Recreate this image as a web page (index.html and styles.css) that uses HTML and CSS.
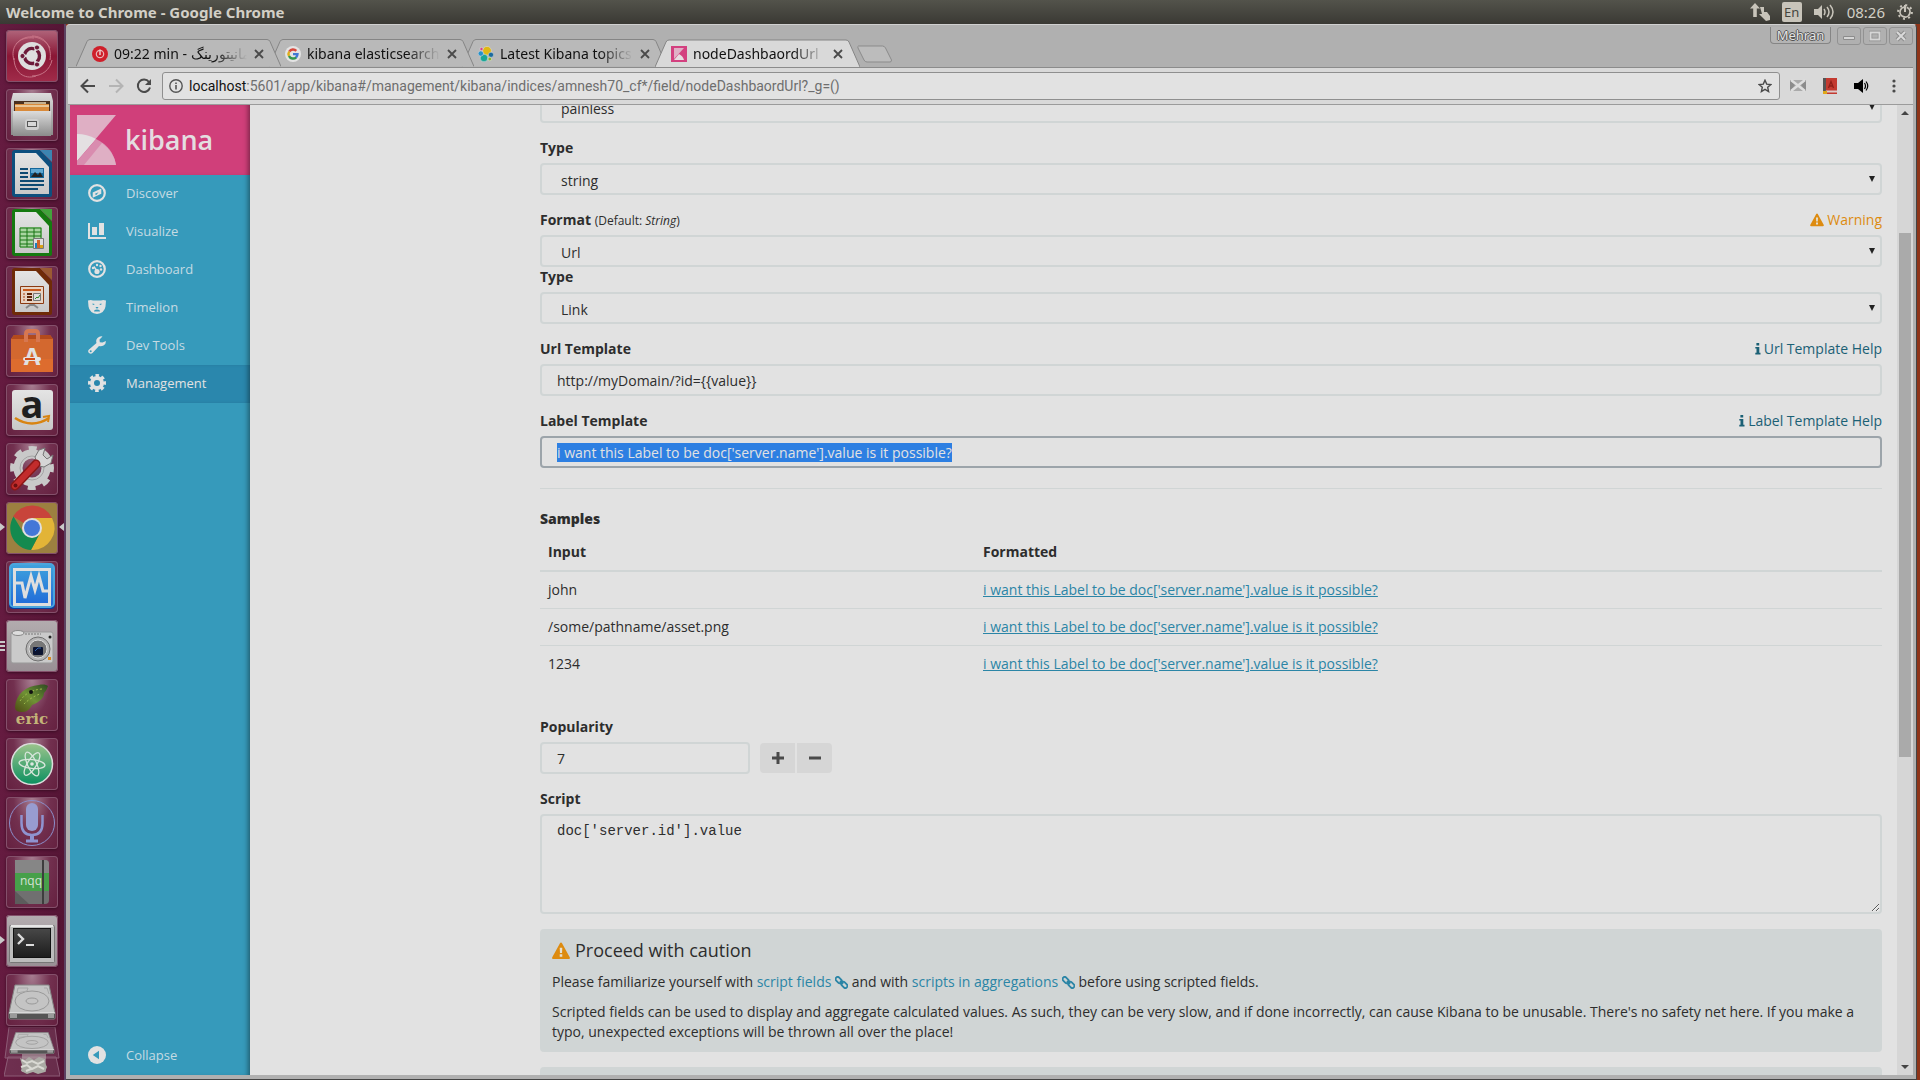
FILE: index.html
```html
<!DOCTYPE html>
<html lang="en">
<head>
    <meta charset="UTF-8">
    <meta name="viewport" content="width=device-width, initial-scale=1.0">
    <title>nodeDashbaordUrl - Kibana</title>
    <link rel="stylesheet" href="styles.css">
</head>
<body>

    <!-- shared gradients and symbols -->
    <svg class="defs" width="0" height="0" aria-hidden="true">
        <defs>
            <linearGradient id="metal" x1="0" y1="0" x2="0" y2="1"><stop offset="0" stop-color="#dcdcdc"/><stop offset="1" stop-color="#8b8b8b"/></linearGradient>
            <linearGradient id="paper" x1="0" y1="0" x2="0" y2="1"><stop offset="0" stop-color="#e4e4e4"/><stop offset="1" stop-color="#c8c8c8"/></linearGradient>
            <linearGradient id="blue" x1="0" y1="0" x2="0" y2="1"><stop offset="0" stop-color="#3fa3dd"/><stop offset="1" stop-color="#1f68d8"/></linearGradient>
            <linearGradient id="green" x1="0" y1="0" x2="0" y2="1"><stop offset="0" stop-color="#9cc48c"/><stop offset="1" stop-color="#0b9060"/></linearGradient>
            <linearGradient id="snake" x1="0" y1="1" x2="1" y2="0"><stop offset="0" stop-color="#4d4a12"/><stop offset=".5" stop-color="#6f9235"/><stop offset="1" stop-color="#2e4a20"/></linearGradient>
            <linearGradient id="screen" x1="0" y1="0" x2="0" y2="1"><stop offset="0" stop-color="#484848"/><stop offset="1" stop-color="#1c1c1c"/></linearGradient>
        </defs>
        <symbol id="i-warning" viewBox="0 0 14 14"><path fill="currentColor" d="M6.2.9a.9.9 0 0 1 1.6 0l6 11c.3.6 0 1.3-.8 1.3H1c-.8 0-1.100-.7-.8-1.300z"/><path fill="#e6e0d2" d="M6 4.400h2l-.2 4.200H6.200zM6 9.500h2v1.900H6z"/></symbol>
        <symbol id="i-info" viewBox="0 0 6 12"><path fill="currentColor" d="M1.400 0h2.800v2.400H1.400zM.3 4h4v5.800h1.200v1.700H.3V9.800h1.200V5.600H.3z"/></symbol>
        <symbol id="i-link" viewBox="0 0 13 13"><g fill="none" stroke="currentColor" stroke-width="1.800"><rect x="0.200" y="2" width="7" height="4.200" rx="2.100" transform="rotate(45 3.700 4.100)"/><rect x="5.800" y="6.800" width="7" height="4.200" rx="2.100" transform="rotate(45 9.300 8.900)"/><path d="M5 5l3 3"/></g></symbol>
        <symbol id="i-close" viewBox="0 0 10 10"><path d="M1 1l8 8M9 1L1 9" stroke="#4a4a4a" stroke-width="1.800" fill="none"/></symbol>
        <symbol id="i-drive" viewBox="0 0 48 36" preserveAspectRatio="none">
            <path d="M7 1h34l6 28v5a1 1 0 0 1-1 1H2a1 1 0 0 1-1-1v-5z" fill="#c4c4c4" stroke="#858585"/>
            <path d="M1 29h46v5a1 1 0 0 1-1 1H2a1 1 0 0 1-1-1z" fill="#555"/><path d="M2 30h7v4H2zM40 30h6v4h-6z" fill="#9a9a9a"/>
            <path d="M1 29h46" stroke="#eee"/>
            <ellipse cx="24" cy="17" rx="17" ry="10" fill="none" stroke="#999"/><ellipse cx="24" cy="17" rx="6" ry="3" fill="none" stroke="#999"/>
            <path d="M10 4h10l-1 3-10 2zM36 4h3l2 6" fill="none" stroke="#a8a8a8"/>
        </symbol>
    </svg>

    <header class="topbar">
        <span class="topbar-title">Welcome to Chrome - Google Chrome</span>
        <div class="indicators">
            <svg width="20" height="18" viewBox="0 0 20 18"><path fill="#c8c4ba" d="M5 0l5 5.500H6.800V14H3.200V5.500H0zM10 4h4v5h3l3 4v4l-4 1-4-4-3-3h3z"/></svg>
            <span class="lang">En</span>
            <svg width="21" height="18" viewBox="0 0 21 18"><path fill="#c8c4ba" d="M0 6h4l4-4v14l-4-4H0z"/><path fill="none" stroke="#c8c4ba" stroke-width="1.500" d="M10 6q2 3 0 6M13 4q4 5 0 10M16 2q6 7 0 14"/></svg>
            <span class="clock">08:26</span>
            <svg width="16" height="16" viewBox="0 0 16 16"><g fill="none" stroke="#c8c4ba"><circle cx="8" cy="8" r="5" stroke-width="1.800" stroke-dasharray="28 3.400" transform="rotate(-70 8 8)"/><circle cx="8" cy="8" r="6.900" stroke-width="2" stroke-dasharray="2 3.420"/><path d="M8 1v7" stroke-width="2"/></g></svg>
        </div>
    </header>

    <div class="desktop">
        <nav class="launcher" aria-label="Launcher">
            <div class="tile tile-red"><svg viewBox="0 0 52 52"><g fill="none" stroke="#c77386" stroke-width="1"><path d="M26 6c14 0 20 12 18 24M10 14C20 2 38 6 44 18M8 30C4 18 12 6 28 8M30 46C18 50 8 42 8 28M46 30c-2 10-10 16-20 16"/></g><circle cx="26" cy="26" r="14" fill="#dedede"/><circle cx="26" cy="26" r="7.500" fill="none" stroke="#6d1a39" stroke-width="3.400" stroke-dasharray="13 2.700" transform="rotate(-50 26 26)"/><g fill="#6d1a39" stroke="#dedede"><circle cx="16.500" cy="26" r="2.600"/><circle cx="31" cy="17.500" r="2.600"/><circle cx="31" cy="34.500" r="2.600"/></g></svg></div>
            <div class="tile"><svg viewBox="0 0 52 52"><path d="M7 4h38l2 8v34H5V12z" fill="url(#metal)"/><path d="M8 12h36v10H8z" fill="#49301f"/><path d="M9 15h34v7H9z" fill="#d98a3a"/><path d="M9 17h34M18 14h22" stroke="#eedcb8" stroke-width="1.500"/><path d="M7 22h38v25H7z" fill="url(#metal)"/><rect x="19" y="30" width="14" height="11" rx="3" fill="#cfcfcf"/><rect x="21.500" y="32.500" width="9" height="5" fill="#d8d8d8" stroke="#555"/></svg></div>
            <div class="tile"><svg viewBox="0 0 52 52"><path d="M9 2h25l12 13v32a2 2 0 0 1-2 2H9a3 3 0 0 1-3-3V5a3 3 0 0 1 3-3z" fill="#0d4f7e"/><path d="M34 2h12v12z" fill="#3c84b1"/><path d="M9 5h21l13 14v27H9z" fill="url(#paper)"/><path d="M14 21h8M14 25h8M14 29h8M14 33h24M14 37h24M14 41h18" stroke="#0d4a72" stroke-width="2"/><path d="M24 20h14v10H24z" fill="#15679a"/><path d="M25 21h12v4H25z" fill="#5fa8d2"/><path d="M25 29l4-5 3 3 2-3 3 5z" fill="#222"/></svg></div>
            <div class="tile"><svg viewBox="0 0 52 52"><path d="M9 2h25l12 13v32a2 2 0 0 1-2 2H9a3 3 0 0 1-3-3V5a3 3 0 0 1 3-3z" fill="#157a10"/><path d="M34 2h12v12z" fill="#43a33c"/><path d="M9 5h21l13 14v27H9z" fill="url(#paper)"/><path d="M14 20h22v21H14z" fill="#a9d5a0"/><path d="M14 21h21v19H14zM14 25h21M14 29h21M14 33h21M14 37h21M21 21v19M28 21v19" fill="none" stroke="#167512"/><path d="M27.500 31.500h10v10h-10z" fill="#ddd" stroke="#777"/><path d="M29 36h2v5h-2z" fill="#1c80c0"/><path d="M31 33h3v8h-3z" fill="#d0642a"/><path d="M34 38h3v3h-3z" fill="#d8a318"/></svg></div>
            <div class="tile"><svg viewBox="0 0 52 52"><path d="M9 2h25l12 13v32a2 2 0 0 1-2 2H9a3 3 0 0 1-3-3V5a3 3 0 0 1 3-3z" fill="#6f2b08"/><path d="M34 2h12v12z" fill="#9b5a33"/><path d="M9 5h21l13 14v27H9z" fill="url(#paper)"/><path d="M14.500 20.500h23v17h-23z" fill="#e8d4c4" stroke="#8b3a12"/><path d="M17 24h18" stroke="#c95a1c" stroke-width="2"/><path d="M17 28h2M17 31h2M17 34h2" stroke="#c98a6a" stroke-width="2"/><path d="M21 28h5M21 31h5M21 34h5" stroke="#5f2508" stroke-width="2"/><path d="M27.500 27.500h7v7h-7z" fill="#ddd" stroke="#777"/><path d="M29 33l2-2 1 1 2-3" fill="none" stroke="#2f8c2a"/><path d="M20 42l4-3h4l4 3" fill="none" stroke="#888" stroke-width="2"/></svg></div>
            <div class="tile"><svg viewBox="0 0 52 52"><path d="M5 14l3-4h36l3 4v33H5z" fill="#d3682f"/><path d="M5 14l3-4h36l3 4z" fill="#b34a1c"/><path d="M5 34h42v13H5z" fill="#dd6c2e"/><path d="M20 17V9q0-3 3-3h6q3 0 3 3v8" fill="none" stroke="#d77750" stroke-width="4"/><text x="26" y="40" class="ico-store">A</text><rect x="17" y="32" width="18" height="4" rx="2" fill="#e4e4e4"/><path d="M19 34h10" stroke="#d24c1a" stroke-width="2"/></svg></div>
            <div class="tile"><svg viewBox="0 0 52 52"><rect x="6" y="6" width="41" height="40" rx="3" fill="url(#paper)"/><text x="26" y="34" class="ico-amazon">a</text><path d="M9 34q17 11 34 0" fill="none" stroke="#d88412" stroke-width="2.600"/><path d="M37 33l6-1-1 6" fill="none" stroke="#d88412" stroke-width="2"/></svg></div>
            <div class="tile"><svg viewBox="0 0 52 52"><circle cx="26" cy="25" r="14" fill="none" stroke="#c9c9c9" stroke-width="9"/><circle cx="26" cy="25" r="19.500" fill="none" stroke="#c9c9c9" stroke-width="5" stroke-dasharray="7.700 7.615" transform="rotate(-11 26 25)"/><circle cx="26" cy="25" r="12" fill="none" stroke="#a4a4a4"/><path d="M31 20l-2-6 4-7 6-2-2 7 4 4 6-4-2 8-7 4-5-1z" fill="#d6d6d6" stroke="#777"/><path d="M9 43L30 21" stroke="#8b1717" stroke-width="9" stroke-linecap="round"/><path d="M9 43L30 21" stroke="#c22c2c" stroke-width="6" stroke-linecap="round"/><circle cx="9.500" cy="42.500" r="2" fill="#6d1010"/></svg></div>
            <div class="tile tile-gold"><i class="pip"></i><i class="pip pip-right"></i><svg viewBox="0 0 52 52"><path d="M26 26L7 14.500A22 22 0 0 1 46 16H26z" fill="#c8443b"/><path d="M26 16h20a22 22 0 0 1-21 32l9-17z" fill="#e2b437"/><path d="M7.500 14.500A22 22 0 0 0 25 48l9-17-17-1z" fill="#148a4f"/><circle cx="26" cy="26" r="10" fill="#dfdfdf"/><circle cx="26" cy="26" r="8" fill="#4377d8"/></svg></div>
            <div class="tile"><svg viewBox="0 0 52 52"><rect x="3" y="4" width="46" height="44" rx="4" fill="#0b3c9c"/><rect x="4" y="3" width="44" height="43" rx="4" fill="url(#blue)" stroke="#4aa5dd" stroke-width="2"/><rect x="8.500" y="8.500" width="35" height="35" fill="none" stroke="#dedede" stroke-width="3"/><path d="M9 22h7l3 15 6-22 4 14 4-14 4 15h7" fill="none" stroke="#dedede" stroke-width="3"/></svg></div>
            <div class="tile tile-light"><i class="dots"></i><svg viewBox="0 0 52 52"><rect x="5" y="12" width="42" height="31" rx="2" fill="#cacaca" stroke="#999"/><ellipse cx="12" cy="13" rx="6" ry="2.500" fill="#ddd" stroke="#888"/><path d="M19 14h16" stroke="#777" stroke-dasharray="2 1"/><circle cx="32" cy="29" r="12" fill="#b4b4b4" stroke="#707070"/><circle cx="32" cy="29" r="9" fill="#777" stroke="#ddd"/><rect x="27" y="27" width="10" height="8" rx="1" fill="#0c1430"/><path d="M29 31l3-3h3" stroke="#2f62b0" fill="none"/><circle cx="44" cy="17" r="1.500" fill="#222"/><path d="M42 37h3v3h-3z" fill="#d98a20"/></svg></div>
            <div class="tile"><svg viewBox="0 0 52 52"><path d="M9 28C10 15 20 7 33 6c4-1 8 0 9 1-1 3-2 5-4 7 0 6-7 10-12 12-2 4-5 7-9 7-5 0-8-1-8-5z" fill="url(#snake)"/><path d="M14 22c4-6 10-11 22-12M18 25c4-4 10-8 16-10" fill="none" stroke="#a0bb4c" stroke-dasharray="2 2"/><circle cx="25" cy="13" r="2" fill="#111"/><text x="26" y="45" class="ico-eric">eric</text></svg></div>
            <div class="tile"><svg viewBox="0 0 52 52"><circle cx="26" cy="26" r="20.500" fill="url(#green)" stroke="#dcdcdc" stroke-width="1.500"/><g fill="none" stroke="#d8e6dc" stroke-width="1.300"><ellipse cx="26" cy="26" rx="13" ry="4.500" transform="rotate(6 26 26)"/><ellipse cx="26" cy="26" rx="13" ry="4.500" transform="rotate(65 26 26)"/><ellipse cx="26" cy="26" rx="13" ry="4.500" transform="rotate(122 26 26)"/></g><circle cx="26" cy="26" r="1.800" fill="#dfe8e2"/></svg></div>
            <div class="tile"><svg viewBox="0 0 52 52"><circle cx="26" cy="26" r="22.500" fill="none" stroke="#8c8fcc"/><rect x="20" y="6" width="12" height="28" rx="6" fill="#989cd0"/><path d="M15.500 18v8q0 12 10.500 12t10.500-12v-8" fill="none" stroke="#8f93d0" stroke-width="2.500"/><path d="M26 37v6" stroke="#8f93d0" stroke-width="4"/><path d="M20 44h12" stroke="#8f93d0" stroke-width="3"/></svg></div>
            <div class="tile"><svg viewBox="0 0 52 52"><path d="M9 4h30q4 0 4 4v36q0 4-4 4H9z" fill="#707070"/><path d="M9 4h30q4 0 4 4v10H9z" fill="#868686"/><path d="M9 17h34v18H9z" fill="#47a04a"/><path d="M9 35l14 13H9z" fill="#5c5c5c"/><path d="M37 4v44" stroke="#3d3d3d" stroke-width="2"/><text x="14" y="29" class="ico-nqq">nqq</text></svg></div>
            <div class="tile tile-light"><i class="pip"></i><svg viewBox="0 0 52 52"><rect x="3.500" y="10.500" width="45" height="37" rx="1" fill="#bcbcbc" stroke="#777"/><path d="M5 11h42" stroke="#e6e6e6" stroke-width="2"/><rect x="7.500" y="13.500" width="37" height="29" fill="url(#screen)" stroke="#111"/><path d="M12 19l5 5-5 5" fill="none" stroke="#dcdcdc" stroke-width="2.400"/><path d="M20 30h8" stroke="#dcdcdc" stroke-width="2"/></svg></div>
            <div class="tile"><svg viewBox="0 0 52 52"><use href="#i-drive" x="2" y="10" width="48" height="36"/></svg></div>
            <div class="tile-stack"><svg viewBox="0 0 56 50"><path d="M5 0h46l4 31H1zM4 30h48l4 19H0z" fill="#7a4460" fill-opacity=".5" stroke="#8d5d77"/><path d="M18 27h24v18H18z" fill="#c0c0bb" fill-opacity=".5"/><use href="#i-drive" x="5" y="5" width="46" height="22"/><path d="M16 31l5 2 4-3 5 3 5-3 6 2v4l2 4-2 5-7 2-5-2-6 2-6-3 1-6z" fill="#aaaaa4"/><path d="M18 33l5 3 5-2 6 3 6-3M17 40l6-2 5 4 6-3 6 3M22 44l5-2" fill="none" stroke="#dadad4" stroke-width="2"/></svg></div>
        </nav>

        <div class="window">
            <div class="tabstrip">
                <div class="tabs">
                    <div class="tab tab-1">
                        <svg class="tab-shape" viewBox="0 0 205 28"><path d="M0 27.500L11 2.500q1-2 3-2h177q2 0 3 2l11 25"/></svg>
                        <svg class="favicon" viewBox="0 0 16 16"><circle cx="8" cy="8" r="8" fill="#cf1f2a"/><circle cx="8" cy="8" r="3.700" fill="none" stroke="#e9b5b8" stroke-width="1.200"/><path d="M8 3.500V9" stroke="#f0d0d0" stroke-width="1.400"/></svg>
                        <span class="tab-title">09:22 min - مانیتورینگ</span>
                        <button class="tab-close" aria-label="Close tab"><svg viewBox="0 0 10 10"><use href="#i-close"/></svg></button>
                    </div>
                    <div class="tab tab-2">
                        <svg class="tab-shape" viewBox="0 0 205 28"><path d="M0 27.500L11 2.500q1-2 3-2h177q2 0 3 2l11 25"/></svg>
                        <svg class="favicon" viewBox="0 0 16 16"><circle cx="8" cy="8" r="8" fill="#e4e4e4"/><g fill="none" stroke-width="2.400"><path d="M4.300 5.500A4.500 4.500 0 0 1 11.300 4.900" stroke="#d8473b"/><path d="M4 10A4.500 4.500 0 0 1 4.200 5.600" stroke="#dfae1c"/><path d="M11.200 11.300A4.500 4.500 0 0 1 4 9.900" stroke="#33974d"/><path d="M8 8.100h4.500q0 2-1.500 3.400" stroke="#4178d4"/></g></svg>
                        <span class="tab-title">kibana elasticsearch</span>
                        <button class="tab-close" aria-label="Close tab"><svg viewBox="0 0 10 10"><use href="#i-close"/></svg></button>
                    </div>
                    <div class="tab tab-3">
                        <svg class="tab-shape" viewBox="0 0 205 28"><path d="M0 27.500L11 2.500q1-2 3-2h177q2 0 3 2l11 25"/></svg>
                        <svg class="favicon" viewBox="0 0 16 16"><g stroke="#e0e0e0" stroke-width=".5"><circle cx="9" cy="4.800" r="4.400" fill="#dfb815"/><circle cx="6" cy="12" r="3.800" fill="#1ba597"/><circle cx="2.800" cy="7.500" r="2.600" fill="#2591cb"/><circle cx="13" cy="8.800" r="2.600" fill="#1c6b9e"/><circle cx="3.500" cy="3" r="1.600" fill="#d5408a"/><circle cx="11.800" cy="13" r="1.800" fill="#86b52c"/></g></svg>
                        <span class="tab-title">Latest Kibana topics</span>
                        <button class="tab-close" aria-label="Close tab"><svg viewBox="0 0 10 10"><use href="#i-close"/></svg></button>
                    </div>
                    <div class="tab tab-active">
                        <svg class="tab-shape" viewBox="0 0 205 28"><path d="M0 27.500L11 2.500q1-2 3-2h177q2 0 3 2l11 25"/></svg>
                        <svg class="favicon" viewBox="0 0 16 16"><path d="M0 0h16v16H0z" fill="#d3407f"/><path d="M3 2h10L3 13z" fill="#e0b0c6"/><path d="M3 14L8 8q4 2 5 6z" fill="#e6dde1"/></svg>
                        <span class="tab-title">nodeDashbaordUrl</span>
                        <button class="tab-close" aria-label="Close tab"><svg viewBox="0 0 10 10"><use href="#i-close"/></svg></button>
                    </div>
                    <button class="new-tab" aria-label="New tab"><svg viewBox="0 0 36 18"><path d="M1.500 1h24q2 0 3 2l6 12q0 2-1.500 2h-23q-2 0-3-2L1 3q-.5-2 .5-2z" fill="#bcbcbc" stroke="#8b8b8b"/></svg></button>
                </div>
                <div class="win-controls">
                    <button class="profile">Mehran</button>
                    <button class="win-btn" aria-label="Minimize"><svg viewBox="0 0 12 12"><path d="M.5 6.500h11v3H.5z" fill="#d6d6d6" stroke="#8c8c8c"/></svg></button>
                    <button class="win-btn" aria-label="Maximize"><svg viewBox="0 0 12 12"><rect x="1.500" y="2.500" width="9" height="7" fill="none" stroke="#8c8c8c" stroke-width="3.500"/><rect x="1.500" y="2.500" width="9" height="7" fill="none" stroke="#d6d6d6" stroke-width="2"/></svg></button>
                    <button class="win-btn" aria-label="Close"><svg viewBox="0 0 12 12"><path d="M2 2l8 8M10 2l-8 8" stroke="#8c8c8c" stroke-width="4"/><path d="M2 2l8 8M10 2l-8 8" stroke="#dadada" stroke-width="2"/></svg></button>
                </div>
            </div>

            <div class="toolbar">
                <div class="nav-btns">
                    <button aria-label="Back"><svg viewBox="0 0 16 16"><path d="M15 8H2M8 1.500L1.500 8 8 14.500" fill="none" stroke="#4a4a4a" stroke-width="2"/></svg></button>
                    <button aria-label="Forward"><svg viewBox="0 0 16 16"><path d="M1 8h13M8 1.500L14.500 8 8 14.500" fill="none" stroke="#b4b4b4" stroke-width="2"/></svg></button>
                    <button aria-label="Reload"><svg viewBox="0 0 16 16"><path d="M13 4A6.200 6.200 0 1 0 14 9.500" fill="none" stroke="#4a4a4a" stroke-width="2"/><path d="M15 1v6H9z" fill="#4a4a4a"/></svg></button>
                </div>
                <div class="omnibox">
                    <svg width="14" height="14" viewBox="0 0 14 14"><circle cx="7" cy="7" r="6.200" fill="none" stroke="#555" stroke-width="1.400"/><path d="M6.200 6h1.600v4.500H6.200zM6.200 3.400h1.600v1.600H6.200z" fill="#555"/></svg>
                    <span class="url"><b>localhost</b>:5601/app/kibana#/management/kibana/indices/amnesh70_cf*/field/nodeDashbaordUrl?_g=()</span>
                    <button class="star" aria-label="Bookmark"><svg viewBox="0 0 14 14"><path d="M7 1.200l1.700 3.900 4.200.4-3.200 2.800.9 4.200L7 10.300l-3.600 2.200.9-4.200L1.100 5.500l4.200-.4z" fill="none" stroke="#4a4a4a" stroke-width="1.400"/></svg></button>
                </div>
                <div class="extensions">
                    <svg width="16" height="16" viewBox="0 0 16 16"><path d="M0 2h16v11H0z" fill="#aaa"/><path d="M0 2l5 5-5 6M16 2l-5 5 5 6" fill="#8c8c8c"/><path d="M1 2l14 11M15 2L1 13" stroke="#dedede" stroke-width="2.400"/></svg>
                    <svg width="14" height="16" viewBox="0 0 14 16"><path d="M0 0h14v16H0z" fill="#c33a30"/><path d="M0 0h3v13H0z" fill="#555"/><path d="M3 12.500h11v2H1z" fill="#dcc"/><path d="M5.500 10L8 3.500l2.500 6.500M6.500 8h3" fill="none" stroke="#8f1f18" stroke-width="1.300"/><path d="M0 13h4v3H0z" fill="#e0a818"/></svg>
                    <svg width="15" height="14" viewBox="0 0 15 14"><path d="M0 4h4l5-4v14l-5-4H0z" fill="#000"/><path d="M10.500 4q2 3 0 6M12 2.500q3.500 4.500 0 9" fill="none" stroke="#000" stroke-width="1.200"/></svg>
                    <svg width="16" height="16" viewBox="0 0 16 16"><g fill="#4a4a4a"><circle cx="8" cy="3" r="1.600"/><circle cx="8" cy="8" r="1.600"/><circle cx="8" cy="13" r="1.600"/></g></svg>
                </div>
            </div>

            <div class="page">
                <aside class="sidebar">
                    <a class="brand" href="#">
                        <svg width="39" height="50" viewBox="0 0 39 50"><path d="M0 0h39L0 46z" fill="#dfafc4"/><path d="M0 19q10 0 19 5L0 46z" fill="#e4e0e2"/><path d="M19 24q17 8 20 26H0v-4z" fill="#d98caf"/><path d="M25 28q12 9 14 22H7z" fill="#dfafc4"/></svg>
                        <span>kibana</span>
                    </a>
                    <a class="nav-item" href="#"><svg viewBox="0 0 18 18"><circle cx="9" cy="9" r="7.800" fill="none" stroke="currentColor" stroke-width="2.200"/><path fill="currentColor" fill-rule="evenodd" d="M13.300 4.500v5.300l-8.600 3.900V8.400zM7 9.700l3.600-1.500L8 11.200z"/></svg>Discover</a>
                    <a class="nav-item" href="#"><svg viewBox="0 0 18 18"><path fill="currentColor" d="M0 1h2v14h16v2H0zM4 5h5v8H4zM11 1h5v12h-5z"/></svg>Visualize</a>
                    <a class="nav-item" href="#"><svg viewBox="0 0 18 18"><circle cx="9" cy="9" r="7.800" fill="none" stroke="currentColor" stroke-width="2.200"/><g fill="currentColor"><circle cx="9" cy="5" r="1.200"/><circle cx="12.500" cy="6" r="1.200"/><circle cx="5" cy="8" r="1.200"/><circle cx="13" cy="9.500" r="1.200"/><circle cx="9" cy="11.500" r="2.600"/></g><path d="M9 11L5.800 6.500" stroke="currentColor" stroke-width="1.500"/></svg>Dashboard</a>
                    <a class="nav-item" href="#"><svg viewBox="0 0 18 18"><path fill="currentColor" d="M0 2.500q3-1 5 0h8q2-1 5 0l-.5 6Q16.500 15 9 16 1.500 15 .5 8.500z"/><path fill="#369abb" d="M4.500 5.500l2 .5-.5 1-1.500-.5zM13.500 5.500l-2 .5.500 1 1.500-.5zM7.500 9h3L9.500 10.500h-1zM6 13.500q0-2 3-2t3 2z"/></svg>Timelion</a>
                    <a class="nav-item" href="#"><svg viewBox="0 0 18 18"><path fill="currentColor" fill-rule="evenodd" d="M14.500.5L11.500 3.500l.3 2.700 2.700.3L18 5q0 3-2.500 4.500-2.200 1.200-4.500.5L4.500 17q-1.700 1.500-3.500 0-1.700-1.800 0-3.500L8.500 7Q7.500 4 9.500 2 12-.3 14.500.5zM2.700 14.200a1 1 0 1 0 0 2 1 1 0 0 0 0-2z"/></svg>Dev Tools</a>
                    <a class="nav-item active" href="#"><svg viewBox="0 0 18 18"><g fill="none" stroke="currentColor"><circle cx="9" cy="9" r="5" stroke-width="4"/><circle cx="9" cy="9" r="7.500" stroke-width="3" stroke-dasharray="3.400 2.490" transform="rotate(-13 9 9)"/></g></svg>Management</a>
                    <button class="nav-item collapse"><svg viewBox="0 0 18 18"><circle cx="9" cy="9" r="9" fill="currentColor"/><path d="M11 4.800v8.400L4.800 9z" fill="#369abb"/></svg>Collapse</button>
                </aside>

                <main class="content">
                    <form class="editor">
                        <div class="select-wrap"><select class="control" aria-label="Language"><option>painless</option></select></div>

                        <div class="group">
                            <div class="label-row"><label for="type">Type</label></div>
                            <div class="select-wrap"><select class="control" id="type"><option>string</option></select></div>
                        </div>

                        <div class="group">
                            <div class="label-row">
                                <label for="format">Format <small>(Default: <i>String</i>)</small></label>
                                <span class="warn"><svg width="14" height="14"><use href="#i-warning"/></svg> Warning</span>
                            </div>
                            <div class="select-wrap"><select class="control" id="format"><option>Url</option></select></div>
                            <div class="label-row"><label for="url-type">Type</label></div>
                            <div class="select-wrap"><select class="control" id="url-type"><option>Link</option></select></div>
                        </div>

                        <div class="group">
                            <div class="label-row">
                                <label for="url-template">Url Template</label>
                                <a class="help" href="#"><svg width="6" height="12"><use href="#i-info"/></svg> Url Template Help</a>
                            </div>
                            <input class="control" id="url-template" type="text" value="http://myDomain/?id={{value}}">
                        </div>

                        <div class="group">
                            <div class="label-row">
                                <label for="label-template">Label Template</label>
                                <a class="help" href="#"><svg width="6" height="12"><use href="#i-info"/></svg> Label Template Help</a>
                            </div>
                            <input class="control" id="label-template" type="text" value="i want this Label to be doc['server.name'].value is it possible?">
                        </div>

                        <hr>

                        <div class="label-row"><strong>Samples</strong></div>
                        <table class="samples">
                            <thead>
                                <tr><th>Input</th><th>Formatted</th></tr>
                            </thead>
                            <tbody>
                                <tr><td>john</td><td><a href="#">i want this Label to be doc['server.name'].value is it possible?</a></td></tr>
                                <tr><td>/some/pathname/asset.png</td><td><a href="#">i want this Label to be doc['server.name'].value is it possible?</a></td></tr>
                                <tr><td>1234</td><td><a href="#">i want this Label to be doc['server.name'].value is it possible?</a></td></tr>
                            </tbody>
                        </table>

                        <div class="group">
                            <div class="label-row"><label for="popularity">Popularity</label></div>
                            <div class="popularity">
                                <input class="control" id="popularity" type="text" value="7">
                                <div class="steppers">
                                    <button type="button" aria-label="Increase"><svg viewBox="0 0 12 12"><path d="M6 0v12M0 6h12" stroke="#4a4a4a" stroke-width="3"/></svg></button>
                                    <button type="button" aria-label="Decrease"><svg viewBox="0 0 12 12"><path d="M0 6h12" stroke="#4a4a4a" stroke-width="3"/></svg></button>
                                </div>
                            </div>
                        </div>

                        <div class="group">
                            <div class="label-row"><label for="script">Script</label></div>
                            <textarea class="control" id="script">doc['server.id'].value</textarea>
                        </div>

                        <div class="notice">
                            <h4><svg width="18" height="18"><use href="#i-warning"/></svg> Proceed with caution</h4>
                            <p>Please familiarize yourself with <a href="#">script fields <svg width="13" height="13"><use href="#i-link"/></svg></a> and with <a href="#">scripts in aggregations <svg width="13" height="13"><use href="#i-link"/></svg></a> before using scripted fields.</p>
                            <p>Scripted fields can be used to display and aggregate calculated values. As such, they can be very slow, and if done incorrectly, can cause Kibana to be unusable. There's no safety net here. If you make a typo, unexpected exceptions will be thrown all over the place!</p>
                        </div>
                        <div class="notice"></div>
                    </form>
                </main>

                <div class="scrollbar">
                    <i class="arrow-up"></i>
                    <div class="track"><div class="thumb"></div></div>
                    <i class="arrow-down"></i>
                </div>
            </div>
        </div>
    </div>

    <script>
        window.onload = function () {
            var field = document.getElementById('label-template');
            field.focus();
            field.select();
        }
    </script>
</body>
</html>
```
FILE: styles.css
```css
* {
    box-sizing: border-box;
}
body {
    margin: 0;
    height: 100vh;
    display: flex;
    flex-direction: column;
    overflow: hidden;
    font-family: "Open Sans", "Noto Sans", sans-serif;
    font-size: 14px;
    line-height: 20px;
    color: #2d2d2d;
    background-color: #3c3b37;
}
button {
    border: 0;
    padding: 0;
    background: none;
    font: inherit;
    color: inherit;
}
svg {
    display: block;
    flex: none;
}
a {
    color: #2b85a6;
    text-decoration: none;
}
.defs {
    position: absolute;
}

/* top panel */
.topbar {
    flex: none;
    display: flex;
    justify-content: space-between;
    align-items: center;
    height: 24px;
    padding: 0 7px 0 6px;
    background: linear-gradient(#53534b, #3a3934);
    color: #d2cfc6;
    font-family: "Noto Sans", sans-serif;
    font-size: 15px;
}
.topbar-title {
    font-weight: bold;
}
.indicators {
    display: flex;
    align-items: center;
    gap: 12px;
}
.lang {
    width: 20px;
    height: 20px;
    border-radius: 2px;
    background: #c8c4ba;
    color: #45443e;
    font-size: 13px;
    text-align: center;
}

/* launcher */
.desktop {
    flex: 1;
    min-height: 0;
    display: flex;
    padding-right: 3px;
    background: #8f3418;
}
.launcher {
    flex: none;
    width: 66px;
    padding: 6px 6px 0;
    overflow: hidden;
    border-right: 2px solid #5c4262;
    background: linear-gradient(to right, #651b40, #551535);
}
.tile {
    position: relative;
    width: 52px;
    height: 52px;
    margin-bottom: 7px;
    border-radius: 4px;
    background: radial-gradient(ellipse at top, #a87f92, #72304f 50%, #64203f);
    box-shadow: inset 0 0 0 1px #84506b, 0 1px 3px #3c0d25;
}
.tile-red {
    background: linear-gradient(#b0657b, #8a1635 50%, #a12c4a);
}
.tile-gold {
    background: #9c8040;
}
.tile-light {
    background: linear-gradient(#b3acaf, #988f94);
}
.tile-stack {
    width: 56px;
    margin: -6px 0 0 -2px;
}
.pip, .dots {
    position: absolute;
    left: -6px;
    top: 21px;
    border: 4px solid transparent;
    border-left: 5px solid #c9c9c9;
    border-right: 0;
}
.pip-right {
    left: auto;
    right: -6px;
    border-left: 0;
    border-right: 5px solid #c9c9c9;
}
.dots {
    border: 0;
    width: 5px;
    height: 10px;
    background: repeating-linear-gradient(#c9c9c9 0 2px, transparent 2px 4px);
}
.ico-store, .ico-amazon, .ico-eric {
    text-anchor: middle;
    font-weight: bold;
}
.ico-store {
    font-size: 24px;
    fill: #e0e0e0;
}
.ico-amazon {
    font-size: 38px;
    fill: #1f1f1f;
}
.ico-eric {
    font-family: "DejaVu Serif", serif;
    font-size: 15px;
    fill: #c3b478;
}
.ico-nqq {
    font-size: 12px;
    fill: #d5e0d5;
}

/* browser window */
.window {
    flex: 1;
    min-width: 0;
    display: flex;
    flex-direction: column;
    padding: 0 3px 4px 2px;
    border-right: 1px solid #444;
    border-bottom: 1px solid #444;
    border-top: 1px solid #d0d0d0;
    border-radius: 4px 4px 0 0;
    background: #b0b0b0;
    font-family: "Noto Sans", sans-serif;
}
.tabstrip {
    flex: none;
    display: flex;
    justify-content: space-between;
    align-items: flex-end;
    height: 43px;
    padding-left: 8px;
    border-bottom: 1px solid #8b8b8b;
}
.tabs {
    display: flex;
    margin-bottom: -1px;
}
.tab {
    position: relative;
    display: flex;
    align-items: center;
    width: 205px;
    height: 29px;
    margin-right: -12px;
    padding: 0 17px 0 16px;
    color: #111;
}
.tab-1 {
    z-index: 3;
}
.tab-2 {
    z-index: 2;
}
.tab-3 {
    z-index: 1;
}
.tab-active {
    z-index: 4;
}
.tab-shape {
    position: absolute;
    left: 0;
    top: 0;
    z-index: -1;
    width: 205px;
    height: 28px;
    fill: #b9b9b9;
    stroke: #858585;
}
.tab-active .tab-shape {
    height: 29px;
    fill: #d9d9d9;
}
.favicon {
    width: 16px;
    height: 16px;
    margin-right: 6px;
}
.tab-title {
    flex: 1;
    overflow: hidden;
    white-space: nowrap;
    -webkit-mask-image: linear-gradient(to right, #000 75%, transparent);
    mask-image: linear-gradient(to right, #000 75%, transparent);
}
.tab-close svg {
    width: 10px;
    height: 10px;
    margin-left: 7px;
}
.new-tab {
    align-self: center;
    width: 36px;
    height: 18px;
    margin-left: 9px;
}
.win-controls {
    display: flex;
    align-self: flex-start;
    gap: 2px;
    padding-top: 2px;
}
.profile {
    width: 61px;
    height: 17px;
    margin-right: 4px;
    border: 1px solid #858585;
    border-top: 0;
    border-radius: 0 0 4px 4px;
    background: #b4b4b4;
    color: #e4e4e4;
    font-size: 13px;
    line-height: 16px;
    text-shadow: 1px 0 #555, -1px 0 #555, 0 1px #555, 0 -1px #555;
}
.win-btn {
    display: flex;
    align-items: center;
    justify-content: center;
    width: 24px;
    height: 18px;
    border: 1px solid #929292;
    border-radius: 3px;
}
.win-btn svg {
    width: 12px;
    height: 12px;
}
.toolbar {
    flex: none;
    display: flex;
    align-items: center;
    gap: 10px;
    height: 37px;
    padding: 0 11px 0 12px;
    background: #d9d9d9;
    border-bottom: 1px solid #9b9b9b;
}
.nav-btns {
    display: flex;
    gap: 12px;
}
.nav-btns svg {
    width: 16px;
    height: 16px;
}
.omnibox {
    flex: 1;
    display: flex;
    align-items: center;
    height: 28px;
    padding: 0 7px 0 6px;
    border: 1px solid #8f8f8f;
    border-radius: 3px;
    background: #e2e2e2;
}
.url {
    flex: 1;
    margin-left: 6px;
    font-family: Roboto, sans-serif;
    color: #6e6e6e;
}
.url b {
    font-weight: normal;
    color: #111;
}
.star svg {
    width: 14px;
    height: 14px;
}
.extensions {
    display: flex;
    align-items: center;
    gap: 17px;
}

/* kibana */
.page {
    flex: 1;
    min-height: 0;
    display: flex;
    margin-left: 2px;
    background: #e2e2e2;
    font-family: "Open Sans", "Noto Sans", sans-serif;
}
.sidebar {
    flex: none;
    display: flex;
    flex-direction: column;
    width: 180px;
    background: #369abb;
    box-shadow: inset -5px 0 5px -3px rgba(0, 0, 0, 0.4);
}
.brand {
    display: flex;
    align-items: center;
    gap: 9px;
    height: 70px;
    padding-left: 7px;
    background: #d03f7a;
    color: #e4dde0;
    font-weight: 600;
    font-size: 27px;
    box-shadow: inset -5px 0 5px -3px rgba(0, 0, 0, 0.4);
}
.nav-item {
    display: flex;
    align-items: center;
    gap: 20px;
    height: 38px;
    padding: 0 0 2px 18px;
    color: #c5dbe3;
    font-size: 13px;
}
.nav-item svg {
    width: 18px;
    height: 18px;
    color: #e2e2e2;
}
.nav-item.active {
    background: #2a87ad;
    color: #e2e2e2;
    box-shadow: inset -5px 0 5px -3px rgba(0, 0, 0, 0.4);
}
.collapse {
    margin-top: auto;
}
.content {
    flex: 1;
    min-width: 0;
    overflow: hidden;
}
/* scrolled down by 14px */
.editor {
    margin: -14px 15px 0 290px;
}
.group, .notice {
    margin: 15px 0;
}
.label-row {
    display: flex;
    justify-content: space-between;
    height: 20px;
    margin-bottom: 5px;
    font-weight: bold;
}
.label-row small {
    font-size: 12px;
    font-weight: normal;
}
.warn, .help {
    display: flex;
    align-items: center;
    gap: 3px;
    color: #dd8b10;
    font-weight: normal;
}
.help {
    color: #1b6075;
}
.control {
    display: block;
    width: 100%;
    height: 32px;
    padding: 4px 15px;
    border: 2px solid #d0d5d5;
    border-radius: 4px;
    outline: 0;
    background: #e2e2e2;
    color: #2d2d2d;
    font: inherit;
}
.control:focus {
    border-color: #9ca4aa;
}
.control::selection {
    background: #2d7fe2;
    color: #e2e2e2;
}
.select-wrap {
    position: relative;
}
.select-wrap::after {
    content: "";
    position: absolute;
    right: 7px;
    top: 13px;
    border: 3px solid transparent;
    border-top: 6px solid #222;
    border-bottom: 0;
}
select.control {
    appearance: none;
    padding: 6px 19px 2px;
}
textarea.control {
    height: 100px;
    padding-top: 5px;
    font-family: "Liberation Mono", monospace;
}
hr {
    margin: 20px 0;
    border: 0;
    border-top: 1px solid #d0d5d5;
}
.samples {
    width: 100%;
    margin-bottom: 35px;
    border-collapse: collapse;
    table-layout: fixed;
}
.samples th, .samples td {
    padding: 8px;
    text-align: left;
}
.samples th:first-child {
    width: 435px;
}
.samples th {
    border-bottom: 2px solid #d0d5d5;
}
.samples td {
    border-bottom: 1px solid #d0d5d5;
}
.samples tr:last-child td {
    border-bottom: 0;
}
.samples a {
    text-decoration: underline;
}
.popularity {
    display: flex;
    align-items: center;
    gap: 10px;
}
.popularity .control {
    width: 210px;
}
.steppers {
    display: flex;
    gap: 2px;
}
.steppers button {
    display: flex;
    align-items: center;
    justify-content: center;
    width: 35px;
    height: 30px;
    background: #d6d6d6;
}
.steppers button:first-child {
    border-radius: 4px 0 0 4px;
}
.steppers button:last-child {
    border-radius: 0 4px 4px 0;
}
.steppers svg {
    width: 12px;
    height: 12px;
}
.notice {
    padding: 10px 12px;
    border-radius: 4px;
    background: #d0d5d5;
}
.notice h4 {
    display: flex;
    align-items: center;
    gap: 5px;
    margin: 0;
    font-size: 18px;
    font-weight: normal;
    line-height: 23px;
}
.notice h4 svg {
    color: #dd8b10;
}
.notice p {
    margin: 10px 0 0;
}
.notice a svg {
    display: inline;
    vertical-align: -2px;
}

/* scrollbar */
.scrollbar {
    flex: none;
    display: flex;
    flex-direction: column;
    align-items: center;
    width: 16px;
    padding: 6px 0;
    background: #d6d6d6;
}
.arrow-up, .arrow-down {
    border: 4px solid transparent;
    border-top: 0;
    border-bottom: 4px solid #444;
}
.arrow-down {
    border-top: 4px solid #444;
    border-bottom: 0;
}
.track {
    flex: 1;
    width: 12px;
    padding-top: 118px;
}
.thumb {
    height: 63%;
    background: #aaa;
}
```
